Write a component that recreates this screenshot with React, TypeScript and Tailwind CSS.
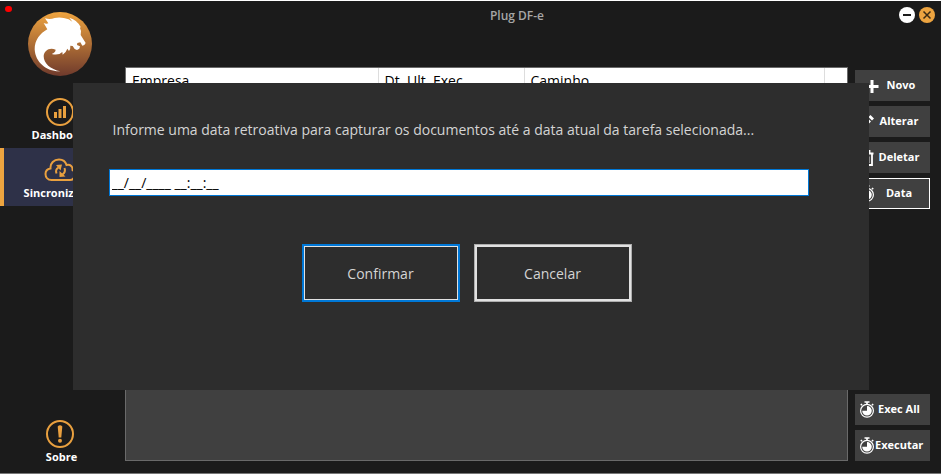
import { useState } from 'react'
import type { ReactNode } from 'react'
import { clsx } from 'clsx'

function LionLogo() {
  return (
    <svg viewBox="84 36 192 192" className="h-16 w-16" aria-hidden="true">
      <defs>
        <linearGradient id="logo" x1="0" y1="0" x2="0" y2="1">
          <stop offset="0" stopColor="#efa43f" />
          <stop offset="1" stopColor="#6f3a2c" />
        </linearGradient>
      </defs>
      <circle cx="180" cy="132" r="96" fill="url(#logo)" />
      <path
        fill="#fff"
        d="M181 214C141 216 106 188 104 148C104 120 120 100 142 88L131 69Q139 73 145 70L135 55Q150 60 164 54Q184 50 206 58L217 65L208 53Q232 60 242 81L240 84Q246 94 242 105L257 129Q254 137 247 137L241 127L232 129L231 135L240 139L238 146L231 150Q222 148 218 138L211 137Q212 147 207 153L202 146Q198 158 188 164L187 156Q176 167 155 162Q166 158 167 149C148 140 132 153 131 168C131 190 151 208 181 214Z"
      />
    </svg>
  )
}

function DashboardIcon() {
  return (
    <svg viewBox="0 0 30 30" className="h-[30px] w-[30px]" aria-hidden="true">
      <circle cx="15" cy="15" r="13" fill="none" stroke="#e9a03f" strokeWidth="2" />
      <path fill="#e9a03f" d="M9 15h3v6H9zM13.500 12h3v9h-3zM18 9h3v12h-3z" />
    </svg>
  )
}

function CloudSyncIcon() {
  return (
    <svg viewBox="0 0 32 24" className="h-6 w-8" aria-hidden="true">
      <g fill="none" stroke="#e9a03f" strokeWidth="2">
        <path d="M7.500 22C3.500 22 1.500 19 1.500 16C1.500 13 3.500 11 6.500 10.500C6 5 10 1.500 15 1.500C19 1.500 21.500 3.500 22.500 7C26.500 6 29 9 28.500 12C33 15 31 22 26 22Z" />
        <path d="M12.500 15.500Q11 11.500 14.500 9.500M20.500 10Q22 14 18.500 16.500" />
      </g>
      <path fill="#e9a03f" d="M12 7l6-.5-1.500 6zM15.500 13l0 6 6-.5z" />
    </svg>
  )
}

function AboutIcon() {
  return (
    <svg viewBox="0 0 30 30" className="h-[30px] w-[30px]" aria-hidden="true">
      <circle cx="15" cy="15" r="13" fill="none" stroke="#e9a03f" strokeWidth="2" />
      <path fill="#e9a03f" d="M12.700 7.500Q15 5 17.300 7.500L16.300 18.500H13.700Z" />
      <circle cx="15" cy="21.800" r="2" fill="#e9a03f" />
    </svg>
  )
}

function PlusIcon() {
  return (
    <svg viewBox="0 0 20 14" className="h-3.5 w-5" aria-hidden="true">
      <path stroke="#fff" strokeWidth="3" d="M13 1v13M6.500 7.500h13" />
    </svg>
  )
}

function PencilIcon() {
  return (
    <svg viewBox="0 0 14 14" className="h-3.5 w-3.5" aria-hidden="true">
      <path fill="#fff" d="M0 14l1-4.500L7.500 3l3.500 3.500L4.500 13zM8.500 2L10.500 0 14 3.500l-2 2z" />
    </svg>
  )
}

function TrashIcon() {
  return (
    <svg viewBox="0 0 14 16" className="h-4 w-3.5" aria-hidden="true">
      <g fill="none" stroke="#fff" strokeWidth="1.800">
        <path d="M.5 3.500h13M4.500 3V1h5v2M2 4.500V15h10V4.500" />
        <path d="M5.300 6.500v6.500M8.700 6.500v6.500" strokeWidth="1.400" />
      </g>
    </svg>
  )
}

function StopwatchIcon() {
  return (
    <svg viewBox="0 0 16 17" className="h-[17px] w-4 shrink-0" aria-hidden="true">
      <g fill="none" stroke="#fff">
        <circle cx="8" cy="9.800" r="6.400" strokeWidth="1.200" />
        <path strokeWidth="1.600" d="M5.500 1h5M8 1v2.500M13 3l1.200 1.200M3 3L1.800 4.200" />
      </g>
      <path fill="#fff" d="M8 9.800V5A4.800 4.800 0 1 1 3.200 9.800Z" />
    </svg>
  )
}

interface NavItemProps {
  icon: ReactNode
  label: string
  active?: boolean
}

function NavItem({ icon, label, active }: NavItemProps) {
  return (
    <button
      type="button"
      className={clsx(
        'flex h-[58px] w-full flex-col items-center justify-center border-l-4 pt-0.5 pr-[9px] text-[11px] leading-4 font-bold text-white',
        active ? 'border-l-[#eda440] bg-[#2e3148]' : 'border-l-transparent'
      )}
    >
      <span className="flex h-[30px] items-center">{icon}</span>
      <span className="pl-[3px]">{label}</span>
    </button>
  )
}

interface ActionButtonProps {
  icon: ReactNode
  label: string
  selected?: boolean
}

function ActionButton({ icon, label, selected }: ActionButtonProps) {
  return (
    <button
      type="button"
      className={clsx(
        'flex h-[31px] w-full items-center border bg-[#404040] pr-1.5 pl-[3px] text-[11px] font-bold text-white',
        selected ? 'border-white' : 'border-[#404040]'
      )}
    >
      <span className="flex min-w-4 shrink-0 justify-center">{icon}</span>
      <span className="flex-1 text-center whitespace-nowrap">{label}</span>
    </button>
  )
}

export default function App() {
  const [date, setDate] = useState('__/__/____ __:__:__')

  return (
    <div className="relative flex min-h-screen border-t border-b border-t-white border-b-[#777777] bg-[#1b1b1b] font-['Open_Sans','Noto_Sans',sans-serif]">
      <span className="absolute top-[5px] left-[5px] h-1.5 w-[7px] rounded-full bg-[#ff0000]" />

      <aside className="flex w-[125px] shrink-0 flex-col pt-[11px] pb-[3px]">
        <div className="flex justify-center pr-[5px]">
          <LionLogo />
        </div>
        <nav className="mt-3.5 flex flex-1 flex-col">
          <NavItem icon={<DashboardIcon />} label="Dashboard" />
          <NavItem icon={<CloudSyncIcon />} label="Sincronização" active />
          <div className="mt-auto">
            <NavItem icon={<AboutIcon />} label="Sobre" />
          </div>
        </nav>
      </aside>

      <div className="flex min-w-0 flex-1 flex-col">
        <header className="flex h-[66px] items-start">
          <h1 className="flex-1 pt-[7px] pl-2.5 text-center text-[12px] leading-4 font-semibold text-[#a6a6a6]">
            Plug DF-e
          </h1>
          <div className="flex gap-1 pt-1.5 pr-1.5">
            <button type="button" aria-label="Minimizar">
              <svg viewBox="0 0 16 16" className="h-4 w-4">
                <circle cx="8" cy="8" r="8" fill="#fff" />
                <path stroke="#1b1b1b" strokeWidth="2" d="M4 8h8" />
              </svg>
            </button>
            <button type="button" aria-label="Fechar">
              <svg viewBox="0 0 16 16" className="h-4 w-4">
                <circle cx="8" cy="8" r="8" fill="#eda440" />
                <path stroke="#3a2a14" strokeWidth="1.500" d="M4.500 4.500l7 7M11.500 4.500l-7 7" />
              </svg>
            </button>
          </div>
        </header>

        <main className="flex flex-1 gap-[7px] pr-[11px] pb-3">
          <div className="min-w-0 flex-1 border border-[#6a6a6a] bg-[#404040]">
            <table className="w-full table-fixed border-collapse bg-white text-left text-[14px] leading-[26px] text-black">
              <thead>
                <tr>
                  <th className="w-[252px] border-r border-[#dddddd] pl-1.5 font-normal">Empresa</th>
                  <th className="w-[146px] border-r border-[#dddddd] pl-1.5 font-normal">Dt. Ult. Exec.</th>
                  <th className="border-r border-[#dddddd] pl-1.5 font-normal">Caminho</th>
                  <td className="w-[23px]" />
                </tr>
              </thead>
            </table>
          </div>

          <div className="flex w-[75px] shrink-0 flex-col gap-[5px] pt-[3px]">
            <ActionButton icon={<PlusIcon />} label="Novo" />
            <ActionButton icon={<PencilIcon />} label="Alterar" />
            <ActionButton icon={<TrashIcon />} label="Deletar" />
            <ActionButton icon={<StopwatchIcon />} label="Data" selected />
            <div className="mt-auto">
              <ActionButton icon={<StopwatchIcon />} label="Exec All" />
            </div>
            <ActionButton icon={<StopwatchIcon />} label="Executar" />
          </div>
        </main>
      </div>

      {/* Modal da data retroativa */}
      <div className="fixed inset-0 flex items-center justify-center pb-px">
        <div role="dialog" aria-label="Data retroativa" className="h-[307px] w-[796px] max-w-full bg-[#2d2d2d] px-9 pt-[37px]">
          <label htmlFor="data" className="block px-1 text-[14px] leading-5 whitespace-nowrap text-[#d4d4d4]">
            Informe uma data retroativa para capturar os documentos até a data atual da tarefa selecionada...
          </label>
          <input
            id="data"
            type="text"
            value={date}
            onChange={(e) => setDate(e.target.value)}
            className="mt-[29px] block h-[27px] w-[700px] max-w-full border border-[#0078d7] bg-white px-0.5 text-[14px] text-black outline-none"
          />
          <div className="mt-12 flex justify-center gap-3.5 pr-2">
            <button
              type="button"
              className="h-[58px] w-[158px] border-2 border-[#0078d7] text-[14px] text-[#d4d4d4] inset-ring inset-ring-[#e1e1e1]"
            >
              Confirmar
            </button>
            <button
              type="button"
              className="h-[58px] w-[158px] border border-[#adadad] text-[14px] text-[#d4d4d4] inset-ring-2 inset-ring-[#e1e1e1]"
            >
              Cancelar
            </button>
          </div>
        </div>
      </div>
    </div>
  )
}
